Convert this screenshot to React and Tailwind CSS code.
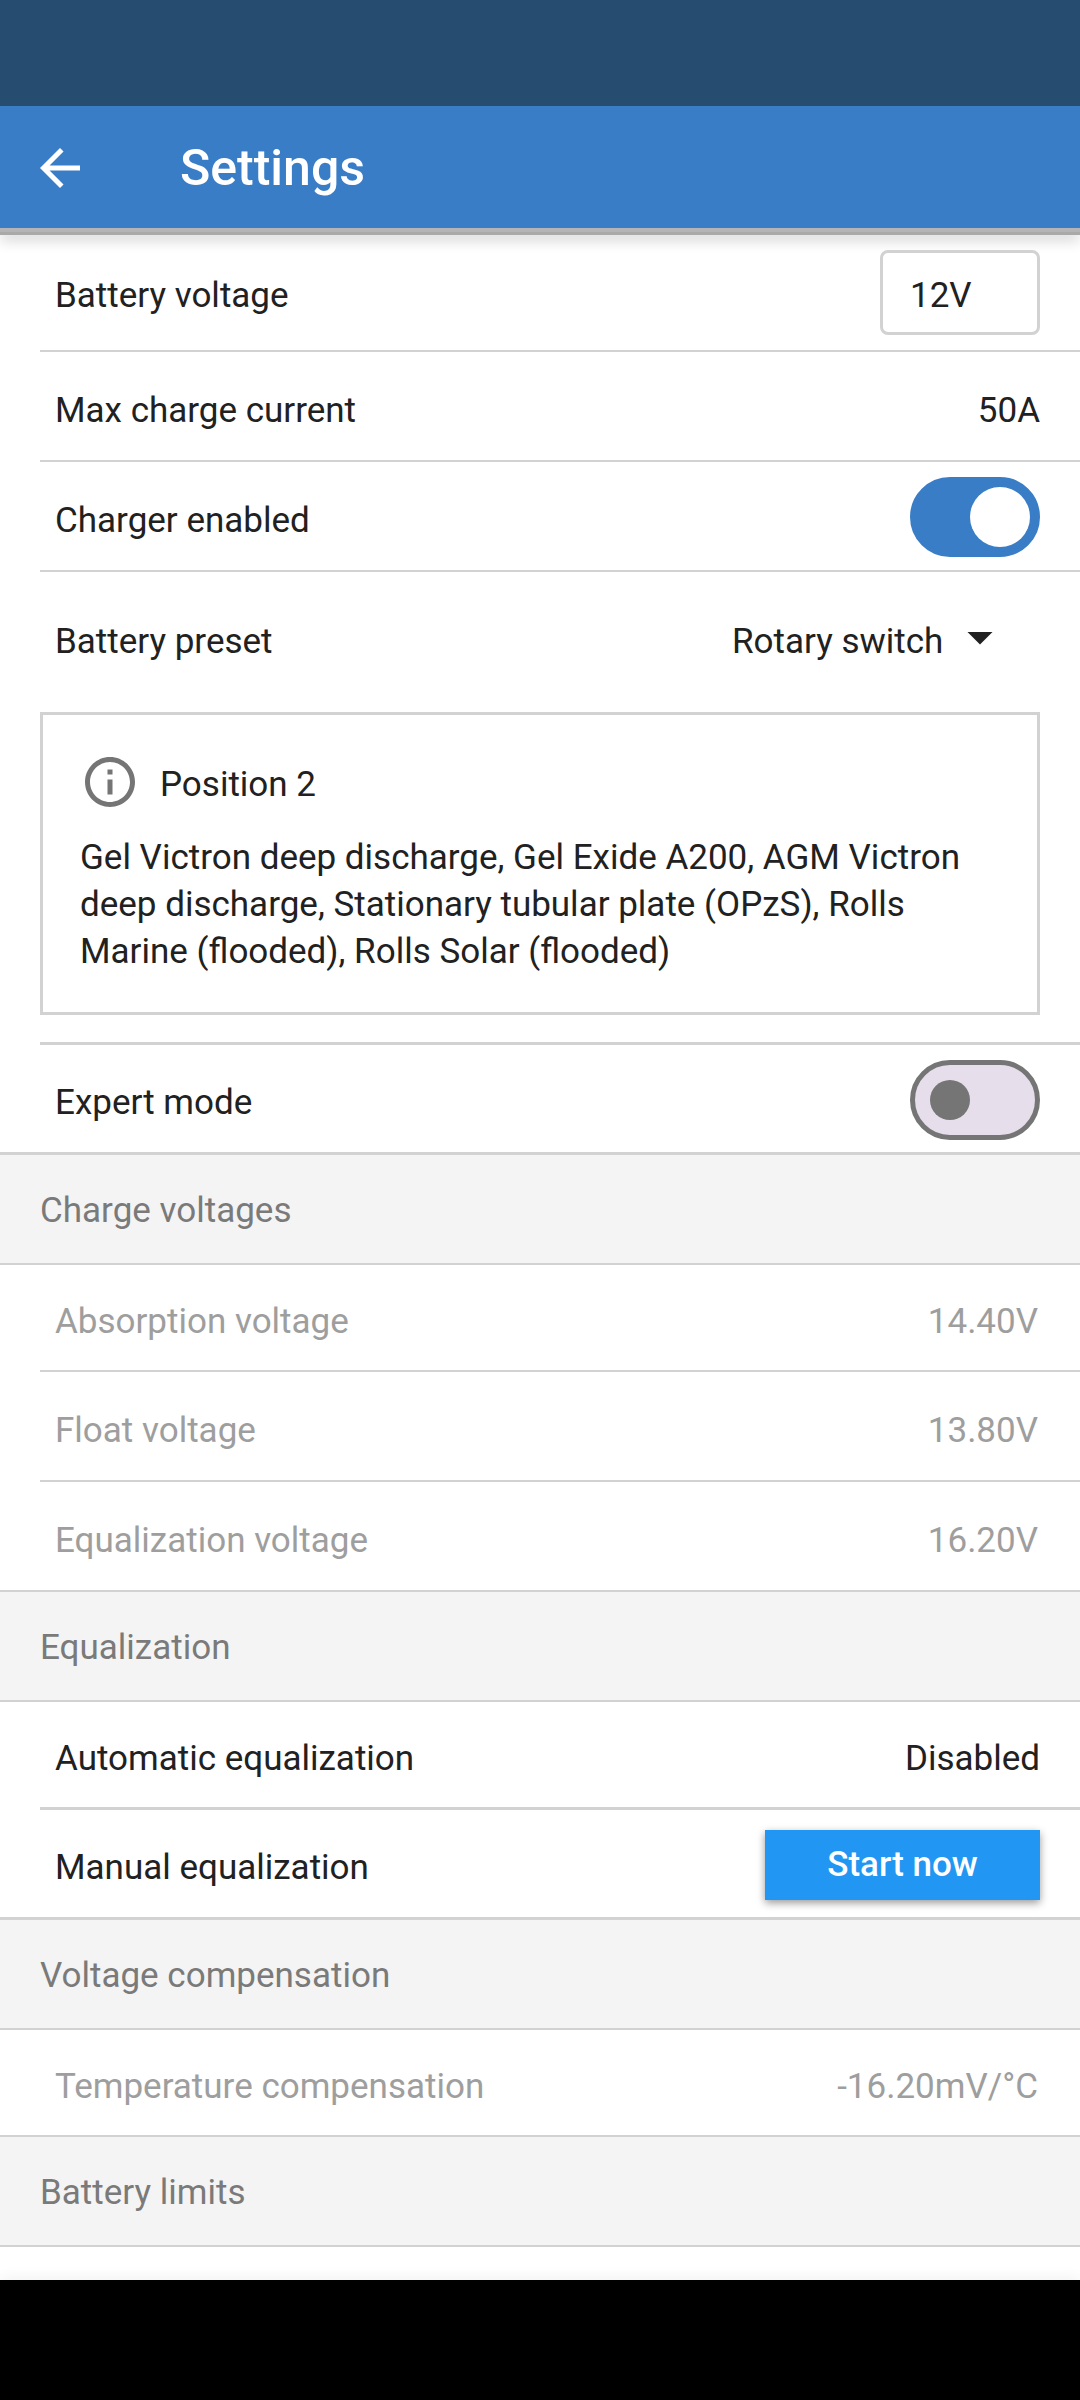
import { useState } from 'react'
import { MdArrowBack, MdArrowDropDown, MdInfoOutline } from 'react-icons/md'

function Section({ title }) {
  return (
    <h2 className="flex h-[110px] items-center border-b-2 border-[#d2d2d2] bg-[#f4f4f4] px-10 pt-0.5 text-[#7a7a7a]">
      {title}
    </h2>
  )
}

// `first` rows follow a section header and are a little shorter,
// `last` rows sit above one, so their divider runs edge to edge
function Row({ label, htmlFor, disabled, first, last, thick, children }) {
  const height = first ? 'h-[105px]' : thick ? 'h-[107px]' : 'h-[108px]'
  return (
    <div className={`border-[#d2d2d2] ${last ? '' : 'ml-10'} ${thick ? 'border-b-[3px]' : 'border-b-2'}`}>
      <div className={`flex items-center justify-between pr-10 ${height} ${last ? 'pl-[55px]' : 'pl-[15px]'} ${disabled ? 'text-[#9e9e9e]' : ''}`}>
        {htmlFor ? <label htmlFor={htmlFor} className="pt-2">{label}</label> : <span className="pt-2">{label}</span>}
        {children}
      </div>
    </div>
  )
}

function Value({ disabled, children }) {
  return <span className={disabled ? 'pt-2 pr-0.5' : 'pt-2'}>{children}</span>
}

function Toggle({ id, checked, onChange }) {
  return (
    <span className="relative mt-0.5 block h-20 w-[130px]">
      <input
        id={id}
        type="checkbox"
        role="switch"
        checked={checked}
        onChange={e => onChange(e.target.checked)}
        className="peer block h-full w-full cursor-pointer appearance-none rounded-full border-[5px] border-[#757575] bg-[#e7deeb] checked:border-[#397dc6] checked:bg-[#397dc6]"
      />
      <span className="pointer-events-none absolute top-5 left-5 size-10 rounded-full bg-[#757575] peer-checked:top-2.5 peer-checked:left-[60px] peer-checked:size-[60px] peer-checked:bg-white" />
    </span>
  )
}

export default function App() {
  const [voltage, setVoltage] = useState('12V')
  const [enabled, setEnabled] = useState(true)
  const [expert, setExpert] = useState(false)

  return (
    <div className="flex min-h-screen flex-col bg-white font-[Roboto,sans-serif] text-[35px] leading-[47px] text-[#212121]">
      <div className="h-[106px] bg-[#264d70]" />
      <header className="relative z-10 flex h-[122px] items-center gap-[90px] bg-[#397dc6] pl-[30px] text-white">
        <button type="button" aria-label="Back" className="pt-0.5">
          <MdArrowBack className="size-[60px]" />
        </button>
        <h1 className="pt-0.5 text-[50px] font-medium">Settings</h1>
      </header>
      <div className="h-[7px] border-b-[3px] border-[#a9a9a9] bg-[#b4b4b4] shadow-[0_4px_14px_rgba(0,0,0,0.25)]" />

      <main className="flex-1">
        <div className="ml-10 border-b-2 border-[#d2d2d2]">
          <div className="flex h-[115px] items-center justify-between pr-10 pl-[15px]">
            <label htmlFor="voltage" className="pt-1.5">Battery voltage</label>
            <input
              id="voltage"
              value={voltage}
              onChange={e => setVoltage(e.target.value)}
              className="h-[85px] w-40 rounded-lg border-[3px] border-[#d2d2d2] bg-white pt-1.5 pl-[27px]"
            />
          </div>
        </div>
        <Row label="Max charge current"><Value>50A</Value></Row>
        <Row label="Charger enabled" htmlFor="enabled">
          <Toggle id="enabled" checked={enabled} onChange={setEnabled} />
        </Row>

        <div className="ml-10 border-b-[3px] border-[#d2d2d2] pb-[27px]">
          <div className="flex h-[130px] items-center justify-between pr-10 pl-[15px]">
            <label htmlFor="preset" className="pt-2">Battery preset</label>
            <div className="relative flex items-center">
              <select id="preset" className="appearance-none bg-transparent pt-2 pr-24">
                <option>Rotary switch</option>
              </select>
              <MdArrowDropDown className="pointer-events-none absolute right-[30px] size-[60px]" />
            </div>
          </div>
          <div className="mt-2.5 mr-10 border-[3px] border-[#d2d2d2] p-[37px]">
            <div className="flex items-center gap-5">
              <MdInfoOutline className="size-[60px] text-[#757575]" />
              <span className="pt-1">Position 2</span>
            </div>
            <p className="mt-[22px]">
              Gel Victron deep discharge, Gel Exide A200, AGM Victron deep discharge, Stationary tubular plate (OPzS), Rolls Marine (flooded), Rolls Solar (flooded)
            </p>
          </div>
        </div>

        <Row label="Expert mode" htmlFor="expert" last thick>
          <Toggle id="expert" checked={expert} onChange={setExpert} />
        </Row>

        <Section title="Charge voltages" />
        <Row label="Absorption voltage" disabled first><Value disabled>14.40V</Value></Row>
        <Row label="Float voltage" disabled><Value disabled>13.80V</Value></Row>
        <Row label="Equalization voltage" disabled last><Value disabled>16.20V</Value></Row>

        <Section title="Equalization" />
        <Row label="Automatic equalization" first thick><Value>Disabled</Value></Row>
        <Row label="Manual equalization" last thick>
          <button type="button" className="mt-0.5 h-[70px] w-[275px] bg-[#2196f3] font-medium text-white shadow-[0_3px_8px_rgba(0,0,0,0.4)]">
            Start now
          </button>
        </Row>

        <Section title="Voltage compensation" />
        <Row label="Temperature compensation" disabled first last><Value disabled>-16.20mV/°C</Value></Row>
        <Section title="Battery limits" />
      </main>
      <div className="h-[120px] bg-black shadow-[0_-2px_14px_rgba(0,0,0,0.06)]" />
    </div>
  )
}
